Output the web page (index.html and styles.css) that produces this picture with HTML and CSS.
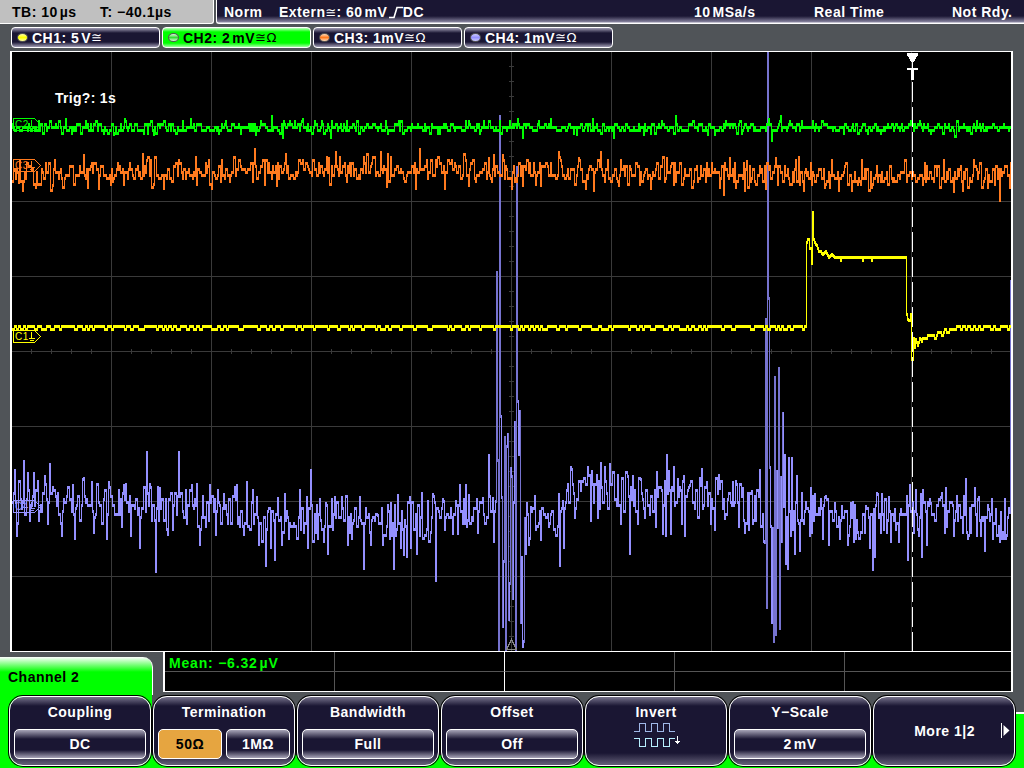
FILE: index.html
```html
<!DOCTYPE html>
<html lang="en">
<head>
    <meta charset="UTF-8">
    <title>Oscilloscope</title>
    <link rel="stylesheet" href="styles.css">
</head>
<body>
<div class="screen">
    <header class="status">
        <div class="timebase">
            <span>TB: 10<i></i>µs</span>
            <span>T: −40.1µs</span>
        </div>
        <div class="trigger">
            <span class="mode">Norm</span>
            <span class="source">Extern<b class="sym">≅</b>: 60<i></i>mV
                <svg width="15" height="13" viewBox="0 0 15 13"><path d="M1 11.5h5l3-10h6" fill="none" stroke="#fff" stroke-width="1.6"/></svg>DC</span>
            <span class="rate">10<i></i>MSa/s</span>
            <span class="sampling">Real Time</span>
            <span class="state">Not Rdy.</span>
        </div>
    </header>

    <nav class="channels">
        <div class="channel ch1"><span class="led"></span><span>CH1: 5<i></i>V</span><span class="sym">≅</span></div>
        <div class="channel ch2 active"><span class="led"></span><span>CH2: 2<i></i>mV</span><span class="sym">≅Ω</span></div>
        <div class="channel ch3"><span class="led"></span><span>CH3: 1mV</span><span class="sym">≅Ω</span></div>
        <div class="channel ch4"><span class="led"></span><span>CH4: 1mV</span><span class="sym">≅Ω</span></div>
    </nav>

    <main class="plot">
        <svg id="scope" width="999" height="599" viewBox="12 52 999 599" shape-rendering="crispEdges">
            <path id="grid" class="grid"/>
            <path id="trace4dim" class="t4dim"/>
            <path id="trace4" class="t4"/>
            <path id="trace3" class="t3"/>
            <path id="trace2" class="t2"/>
            <path id="trace1" class="t1"/>
            <g class="tag c1" transform="translate(13 330)"><path d="M.5 .5h21l6 6l-6 6h-21z"/><text x="2" y="10">C1</text><path d="M18.500 2v6M16 8.500h6M17 10.500h4"/></g>
            <g class="tag c2" transform="translate(13 118)"><path d="M.5 .5h21l6 6l-6 6h-21z"/><text x="2" y="10">C2</text><path d="M18.500 2v6M16 8.500h6M17 10.500h4"/></g>
            <g class="tag c3" transform="translate(13 159)"><path d="M.5 .5h21l6 6l-6 6h-21z"/><text x="2" y="10">C3</text><path d="M18.500 2v6M16 8.500h6M17 10.500h4"/></g>
            <g class="tag c4" transform="translate(13 500)"><path d="M.5 .5h21l6 6l-6 6h-21z"/><text x="2" y="10">C4</text><path d="M18.500 2v6M16 8.500h6M17 10.500h4"/></g>
            <path class="ref" d="M511.5 639.5l5 10h-10z"/>
            <path class="cursor" d="M912.5 82V651"/>
            <path class="pointer" d="M907 53h11v2l-5 8h-1l-5-8zM912 63h1v5h-1zM907 68h11v2h-4v10h-3v-10h-4z"/>
            <text class="note" x="55" y="103">Trig?: 1s</text>
        </svg>
    </main>

    <section class="info">
        <div class="title">Channel 2</div>
        <div class="measure">
            <div class="value">Mean: −6.32<i></i>µV</div><div></div><div></div><div></div><div></div>
            <div></div><div></div><div></div><div></div><div></div>
        </div>
    </section>

    <footer class="softkeys">
        <div class="key"><h2>Coupling</h2><div class="opts"><span>DC</span></div></div>
        <div class="key"><h2>Termination</h2><div class="opts"><span class="on">50Ω</span><span>1MΩ</span></div></div>
        <div class="key"><h2>Bandwidth</h2><div class="opts"><span>Full</span></div></div>
        <div class="key"><h2>Offset</h2><div class="opts"><span>Off</span></div></div>
        <div class="key"><h2>Invert</h2>
            <svg class="wave" width="48" height="26" viewBox="0 0 48 26" fill="none" shape-rendering="crispEdges">
                <path stroke="#a0b8e8" d="M0 9.5h5.5v-8h6v8h6v-8h6v8h6v-8h6v8h5"/>
                <path stroke="#b8f0ff" d="M0 16.5h5.5v8h6v-8h6v8h6v-8h6v8h6v-8h5"/>
                <path stroke="#fff" d="M43.5 14v8M41 19.5h5M42 20.5h3"/>
            </svg>
        </div>
        <div class="key"><h2>Y−Scale</h2><div class="opts"><span>2<i></i>mV</span></div></div>
        <div class="key more">More 1|2
            <svg width="10" height="16" viewBox="0 0 10 16"><path d="M0 0h1v15H0zM2.5 2l6 5.500l-6 5.500z" fill="#fff"/></svg>
        </div>
    </footer>
</div>
<script src="scope.js"></script>
</body>
</html>
```
FILE: styles.css
```css
body {
    margin: 0;
    background: #505458;
    font-family: "Liberation Sans", Arial, sans-serif;
    font-size: 14px;
    font-weight: bold;
    letter-spacing: 0.5px;
    color: #fff;
}

.screen {
    width: 1024px;
    height: 768px;
    display: flex;
    flex-direction: column;
    overflow: hidden;
}

/* narrow gap between a number and its unit */
i {
    display: inline-block;
    width: 2px;
}

.sym {
    font-family: "DejaVu Sans", sans-serif;
    font-weight: normal;
    font-size: 13px;
    letter-spacing: 0;
}

.status {
    display: flex;
    gap: 2px;
    height: 24px;
    line-height: 24px;
    white-space: nowrap;
}

.timebase {
    box-sizing: border-box;
    width: 214px;
    display: grid;
    grid-template-columns: 88px 1fr;
    padding-left: 12px;
    background: #c0c0c0;
    color: #000;
    border-right: 1px solid #fff;
    border-bottom: 1px solid #fff;
    border-bottom-right-radius: 3px;
}

.trigger {
    box-sizing: border-box;
    flex: 1;
    display: grid;
    grid-template-columns: 55px 415px 120px 138px 1fr;
    padding-left: 7px;
    background: linear-gradient(#1a1633 16px, #8884a0 22px, #fff 23px);
    border-left: 1px solid #fff;
    border-bottom: 1px solid #fff;
    border-bottom-left-radius: 3px;
}

.source svg {
    vertical-align: -2px;
    margin-left: -4px;
}

.channels {
    display: flex;
    gap: 2px;
    height: 21px;
    padding: 3px 11px;
}

.channel {
    box-sizing: border-box;
    width: 149px;
    display: flex;
    align-items: center;
    border: 1px solid #fff;
    border-radius: 4px;
    padding-left: 5px;
    background: linear-gradient(#a09cb4, #1a1633 5px, #1a1633 14px, #a09cb4);
}

.channel.active {
    background: linear-gradient(#c0ffc0, #0f0 4px, #0f0 15px, #a0ffa0);
    color: #000;
}

.channel .sym {
    letter-spacing: 0.5px;
}

.led {
    box-sizing: border-box;
    width: 11px;
    height: 9px;
    border: 1px solid #555;
    border-radius: 50%;
    margin-right: 4px;
}

.ch1 .led { background: linear-gradient(#ffa, #ff0, #ffa); }
.ch2 .led { background: linear-gradient(#dfd, #3d3, #dfd); }
.ch3 .led { background: linear-gradient(#fdb, #ff7a1e, #fdb); }
.ch4 .led { background: linear-gradient(#ccf, #9490ff, #ccf); }

.plot {
    margin-left: 10px;
    width: 999px;
    height: 599px;
    background: #000;
    border: 1px solid #fff;
    border-left-width: 2px;
    border-right-width: 2px;
}

.plot svg {
    display: block;
}

.grid { stroke: #3a3a3a; fill: none; }
.t1 { fill: #ff0; }
.t2 { fill: #0f0; }
.t3 { fill: #ff7a1e; }
.t4 { fill: #9490ff; }
.t4dim { fill: #7673cf; }

.tag path { fill: none; stroke: currentColor; }
.tag text { fill: currentColor; font-size: 10px; font-weight: normal; }
.c1 { color: #ff0; }
.c2 { color: #0f0; }
.c3 { color: #ff7a1e; }
.c4 { color: #9490ff; }

.ref { fill: none; stroke: #888; }
.cursor { stroke: #fff; stroke-dasharray: 20 5; }
.pointer, .note { fill: #fff; }
.note { letter-spacing: 0.3px; }

.info {
    display: flex;
    gap: 10px;
    height: 43px;
}

.title {
    box-sizing: border-box;
    width: 153px;
    height: 38px;
    margin-top: 5px;
    padding: 12px 0 0 8px;
    color: #000;
    background: linear-gradient(#fff, #0f0 15px);
    border-right: 1px solid #fff;
    border-top-right-radius: 10px;
}

.measure {
    box-sizing: border-box;
    width: 850px;
    height: 40px;
    display: grid;
    grid-template-columns: 170px 170px 170px 170px 1fr;
    grid-template-rows: 20px 19px;
    background: #000;
    border: 2px solid #fff;
    border-width: 0 2px 1px;
}

.measure div {
    border-right: 1px solid #555;
    border-bottom: 1px solid #555;
}

.measure div:nth-child(5n+2) { border-right-color: #fff; }
.measure div:nth-child(5n) { border-right: none; }
.measure div:nth-child(n+6) { border-bottom: none; }

.measure .value {
    padding-left: 4px;
    line-height: 22px;
    letter-spacing: 0.8px;
    color: #0f0;
}

.softkeys {
    display: flex;
    gap: 2px;
    height: 72px;
    padding: 1px 9px 0;
    background:
        linear-gradient(#0f0, #0f0) 0 0 / 152px 100% no-repeat,
        linear-gradient(#fff 2px, #0f0 2px) 100% 17px / 12px 100% no-repeat,
        linear-gradient(#0f0, #0f0) 0 100% / 100% 13px no-repeat;
}

.key {
    box-sizing: border-box;
    flex: 0 0 142px;
    height: 70px;
    padding: 7px 4px 0;
    text-align: center;
    border: 1px solid #fff;
    border-radius: 14px;
    box-shadow: 0 0 0 1px #000;
    background: linear-gradient(#77738c, #1a1633 9px, #1a1633 56px, #66627a);
}

.key h2 {
    margin: 0;
    font-size: 14px;
    line-height: 17px;
}

.opts {
    display: flex;
    gap: 4px;
    margin-top: 8px;
}

.opts span {
    box-sizing: border-box;
    flex: 1;
    height: 30px;
    line-height: 28px;
    border: 1px solid #fff;
    border-radius: 5px;
    background: linear-gradient(#a8a5b8, #1a1633 9px, #1a1633 20px, #a8a5b8);
}

.opts .on {
    background: #e6a540;
    color: #000;
}

.wave {
    display: block;
    margin: 1px auto 0 44px;
}

.more {
    display: flex;
    align-items: center;
    justify-content: flex-end;
    gap: 26px;
    padding: 0 3px 0 0;
}
```
FILE: scope.js
```js
let seed = 7;
function rnd() {
    seed = (seed * 16807) % 2147483647;
    return seed / 2147483647;
}

// graticule: 10 x 8 divisions with ticks on the centre axes
let grid = '';
for (let x = 111; x < 1011; x += 100) grid += `M${x}.5 52V651`;
for (let y = 126; y < 651; y += 75) grid += `M12 ${y}.5H1011`;
for (let x = 31; x < 1011; x += 20) grid += `M${x}.5 349V354`;
for (let y = 66; y < 651; y += 15) grid += `M509 ${y}.5H514`;
document.getElementById('grid').setAttribute('d', grid);

function lerp(points, x) {
    for (let i = 1; i < points.length; i++) {
        if (x <= points[i][0]) {
            const [x0, y0] = points[i - 1], [x1, y1] = points[i];
            return y0 + (y1 - y0) * (x - x0) / (x1 - x0);
        }
    }
    return points[points.length - 1][1];
}

// noise around a base line, in 3px levels, with fixed peaks
function samples(base, amp, peaks) {
    const y = [];
    let v = 0, hold = 0;
    for (let x = 11; x < 1012; x++) {
        if (hold-- <= 0) {
            v = (rnd() + rnd() + rnd() - 1.5) * amp;
            hold = rnd() < 0.6 ? 0 : 1;
        }
        y[x] = Math.round((lerp(base, x) + v) / 3) * 3;
    }
    for (const [x, py] of peaks) y[x] = py;
    return y;
}

function draw(y, id, dimId) {
    let d = '', dim = '';
    for (let x = 12; x < 1011; x++) {
        const a = Math.min(y[x - 1], y[x]), b = Math.max(y[x - 1], y[x]);
        const s = `M${x} ${a}h1V${b + 3}h-1z`;
        if (dimId && b - a > 110) dim += s; else d += s;
    }
    document.getElementById(id).setAttribute('d', d);
    if (dimId) document.getElementById(dimId).setAttribute('d', dim);
}

draw(samples([[12, 126], [1011, 126]], 5.5, [
    [65, 118], [113, 133], [124, 118], [153, 133], [190, 118], [255, 133], [271, 115], [282, 136],
    [302, 118], [330, 136], [517, 118], [522, 136], [550, 118], [576, 133], [592, 118], [613, 136],
    [643, 133], [675, 115], [707, 133], [714, 133], [768, 118], [771, 139], [780, 115]
]), 'trace2');

draw(samples([[12, 173], [60, 173], [130, 171], [300, 168], [500, 169], [640, 172], [800, 173], [1011, 175]], 14, [
    [18, 181], [35, 186], [52, 184], [83, 154], [98, 187], [163, 187], [211, 187], [254, 148],
    [276, 184], [328, 157], [335, 151], [380, 151], [386, 185], [415, 187], [419, 148], [444, 187],
    [468, 184], [488, 157], [493, 154], [502, 154], [511, 187], [522, 184], [540, 184], [558, 151],
    [578, 157], [585, 187], [600, 151], [618, 184], [650, 187], [666, 157], [723, 193], [729, 157],
    [746, 160], [765, 187], [775, 157], [953, 190], [999, 199]
]), 'trace3');

draw(samples([
    [12, 495], [60, 500], [130, 503], [210, 508], [260, 518], [340, 520], [400, 524], [440, 514], [490, 512],
    [530, 516], [560, 521], [568, 495], [600, 488], [640, 490], [700, 493], [760, 505], [800, 515],
    [850, 519], [900, 515], [950, 510], [1011, 522]
], 24, [
    [14, 469], [16, 534], [23, 460], [27, 472], [29, 519], [33, 472], [44, 475], [47, 522], [49, 463],
    [61, 534], [72, 484], [74, 537], [82, 478], [91, 481], [93, 531], [106, 537], [108, 481], [123, 484],
    [130, 534], [139, 546], [146, 451], [155, 570], [159, 487], [167, 533], [178, 451], [191, 484],
    [199, 543], [209, 484], [215, 533], [223, 493], [236, 484], [243, 533], [246, 481], [256, 496],
    [258, 543], [265, 564], [270, 546], [274, 558], [277, 497], [281, 543], [284, 493], [288, 537],
    [306, 496], [307, 546], [310, 469], [317, 537], [325, 502], [327, 552], [334, 496], [341, 496],
    [347, 543], [351, 537], [359, 496], [363, 567], [370, 543], [377, 514], [382, 543], [390, 502],
    [393, 567], [397, 494], [400, 546], [403, 553], [406, 555], [409, 496], [416, 552], [427, 500],
    [432, 493], [435, 579], [443, 500], [452, 532], [455, 500], [457, 532], [459, 484], [465, 484],
    [468, 494], [477, 531], [482, 497], [488, 454], [492, 497], [493, 540],
    [495, 500], [496, 271], [497, 459], [498, 650], [499, 115], [500, 415], [501, 496], [502, 625],
    [503, 560], [504, 436], [505, 650], [506, 445], [507, 433], [508, 618], [509, 582], [510, 467],
    [511, 475], [512, 597], [513, 501], [514, 421], [515, 650], [516, 166], [517, 400], [518, 453],
    [519, 410], [520, 621], [521, 556], [522, 645], [523, 640], [524, 517], [525, 552], [526, 502],
    [528, 543], [530, 506], [540, 538], [547, 513], [558, 493], [559, 564], [562, 500], [563, 546],
    [570, 466], [571, 468], [575, 507], [587, 466], [590, 519], [591, 470], [597, 516], [604, 466],
    [609, 463], [615, 498], [620, 522], [627, 475], [629, 552], [632, 475], [636, 510], [640, 478],
    [644, 516], [655, 525], [662, 532], [665, 534], [666, 454], [668, 470], [670, 532], [673, 466],
    [677, 478], [681, 522], [683, 475], [684, 534], [689, 484], [694, 507], [700, 484], [706, 481],
    [707, 504], [714, 528], [719, 487], [724, 517], [732, 481], [738, 525], [742, 487], [744, 531],
    [748, 528], [751, 490], [755, 519], [759, 469], [763, 540], [764, 541], [765, 318], [766, 606],
    [767, 52], [768, 297], [769, 466], [770, 525], [771, 621], [772, 527], [773, 640], [774, 376],
    [775, 633], [776, 470], [777, 526], [778, 367], [779, 627], [780, 476], [781, 540], [782, 412],
    [783, 505], [784, 454], [785, 562], [787, 567], [788, 457], [790, 534], [791, 457], [794, 552],
    [796, 475], [799, 549], [804, 510], [810, 487], [811, 531], [814, 493], [822, 537], [824, 496],
    [828, 543], [834, 502], [839, 537], [841, 505], [847, 543], [850, 502], [853, 540], [857, 531],
    [865, 505], [869, 546], [872, 568], [873, 508], [874, 555], [877, 493], [880, 531], [881, 493],
    [888, 496], [890, 540], [894, 508], [898, 540], [900, 508], [907, 558], [909, 484], [915, 489],
    [918, 534], [920, 493], [921, 555], [926, 543], [930, 502], [940, 496], [945, 487], [953, 534],
    [965, 478], [967, 537], [974, 487], [976, 534], [978, 496], [984, 549], [988, 508], [995, 508],
    [999, 540], [1000, 511], [1006, 534], [1009, 511], [1010, 280]
]), 'trace4', 'trace4dim');

// channel 1: flat level, pulse between 806 and 907, slow recovery
const pulse = [
    [806, 241], [807, 238], [808, 238], [809, 247], [810, 247], [811, 262], [812, 211], [813, 238],
    [814, 241], [816, 244], [818, 250], [820, 250], [822, 253], [825, 250], [828, 256], [831, 253],
    [834, 256], [905, 256], [906, 313], [907, 318], [909, 319], [910, 313], [911, 358], [912, 358],
    [913, 337], [914, 346], [915, 338], [917, 344], [919, 337], [921, 338], [925, 336], [930, 334],
    [940, 331], [950, 327], [955, 325], [1011, 326]
];
const y1 = [];
let level = 325, run = 0;
for (let x = 11; x < 1012; x++) {
    if (run-- <= 0) {
        level = level === 325 ? 328 : 325;
        run = Math.floor(rnd() * rnd() * (level === 325 ? 16 : 6)) + 1;
    }
    y1[x] = level;
    if (x >= 806 && x < 955) {
        y1[x] = Math.round(lerp(pulse, x));
        if (x > 834 && x < 905 && [840, 862, 871].includes(x)) y1[x] += 3;
        if (x > 920) y1[x] = Math.round((y1[x] - 325) / 3) * 3 + level;
    }
}
draw(y1, 'trace1');
```
